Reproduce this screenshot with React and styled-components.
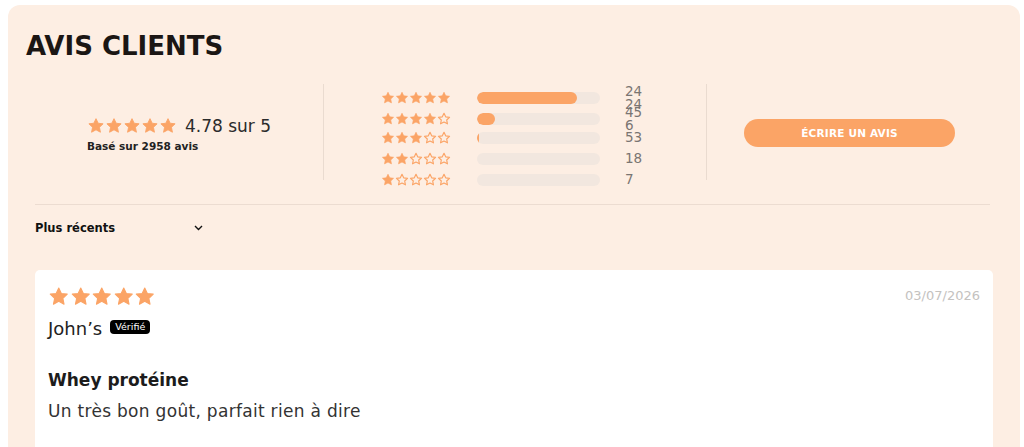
import React from "react";
import styled, { createGlobalStyle } from "styled-components";

const FONT = `"DejaVu Sans", "Open Sans", sans-serif`;
const ORANGE = "#fba466";

const Global = createGlobalStyle`
  html, body { margin: 0; padding: 0; background: #ffffff; }
  body { font-family: ${FONT}; color: #1a1a1a; }
  * { box-sizing: border-box; }
`;

const Page = styled.div`
  padding: 5px 4px 0 8px;
`;

const Panel = styled.section`
  background: #fdeee3;
  border-radius: 12px;
  padding: 26px 27px 30px 18px;
`;

const Title = styled.h2`
  margin: 0;
  font-family: ${FONT};
  font-weight: 700;
  font-size: 26px;
  line-height: 30px;
  color: #1b1614;
`;

const Body = styled.div`
  padding-left: 9px;
`;

const Summary = styled.div`
  display: grid;
  grid-template-columns: 288px 383px 1fr;
  grid-template-rows: 96px;
  height: 96px;
  margin-top: 23px;
`;

const Column = styled.div`
  display: flex;
  align-items: ${(p) => (p.$top ? "flex-start" : "center")};
  justify-content: center;
  border-left: ${(p) => (p.$divider ? "1px solid #eadbd0" : "none")};
  padding-top: ${(p) => (p.$top ? "1px" : "0")};
  overflow: visible;
`;

const Average = styled.div`
  display: flex;
  flex-direction: column;
  gap: 4px;
  margin-top: 3px;
`;

const AverageLine = styled.div`
  display: flex;
  align-items: center;
  gap: 8px;
`;

const AverageValue = styled.span`
  font-size: 17px;
  color: #2b2b2b;
`;

const Based = styled.span`
  font-size: 10.5px;
  font-weight: 700;
  color: #222;
`;

const Stars = styled.span`
  display: inline-flex;
  gap: ${(p) => p.$gap}px;
  line-height: 0;
`;

const Histogram = styled.div`
  display: flex;
  flex-direction: column;
  margin-left: -8px;
`;

const HistRow = styled.div`
  display: grid;
  grid-template-columns: 96px 123px 41px;
  align-items: center;
  height: 21px;
`;

const Track = styled.div`
  height: 12px;
  border-radius: 6px;
  background: #f2e7df;
  overflow: hidden;
`;

const Fill = styled.div`
  height: 100%;
  background: ${ORANGE};
  border-radius: 6px;
`;

const Count = styled.div`
  padding-left: 25px;
  font-size: 13.5px;
  line-height: 12.5px;
  color: #7a7572;
  white-space: pre-line;
`;

const WriteButton = styled.button`
  width: 211px;
  height: 28px;
  margin-left: -1px;
  margin-top: 1px;
  border: none;
  border-radius: 14px;
  background: ${ORANGE};
  color: #ffffff;
  font-family: ${FONT};
  font-weight: 700;
  font-size: 10.5px;
  letter-spacing: 0.2px;
  cursor: pointer;
`;

const Divider = styled.hr`
  margin: 24px 3px 0 0;
  border: none;
  border-top: 1px solid #ecdcd1;
`;

const Sort = styled.div`
  display: flex;
  align-items: center;
  width: 168px;
  justify-content: space-between;
  margin-top: 15px;
  height: 16px;
  font-size: 11.5px;
  font-weight: 700;
  color: #111;
`;

const ReviewCard = styled.article`
  margin-top: 34px;
  background: #ffffff;
  border-radius: 5px;
  padding: 16px 13px 60px 13px;
`;

const ReviewHead = styled.div`
  display: flex;
  justify-content: space-between;
  align-items: center;
`;

const DateText = styled.span`
  font-size: 13px;
  color: #c4c2c0;
  margin-top: -2px;
`;

const Author = styled.div`
  display: flex;
  align-items: center;
  gap: 8px;
  margin-top: 10px;
  font-size: 18px;
  color: #222;
`;

const Badge = styled.span`
  background: #000;
  color: #fff;
  font-size: 9.5px;
  line-height: 14px;
  padding: 0 5px;
  border-radius: 4px;
  margin-top: -3px;
`;

const ReviewTitle = styled.h3`
  margin: 31px 0 0;
  font-size: 17px;
  font-weight: 700;
  color: #1c1c1c;
`;

const ReviewText = styled.p`
  margin: 11px 0 0;
  font-size: 17px;
  letter-spacing: 0.3px;
  color: #333;
`;

const STAR_PATH =
  "M12 2.2l2.9 6.1 6.6.8-4.9 4.6 1.3 6.6L12 17.1l-5.9 3.2 1.3-6.6-4.9-4.6 6.6-.8z";

function Star({ size, filled }) {
  return (
    <svg width={size} height={size} viewBox="0 0 24 24">
      <path
        d={STAR_PATH}
        fill={filled ? ORANGE : "none"}
        stroke={ORANGE}
        strokeWidth={filled ? 1.2 : 2}
        strokeLinejoin="round"
      />
    </svg>
  );
}

function StarRow({ count, size, gap }) {
  return (
    <Stars $gap={gap}>
      {[0, 1, 2, 3, 4].map((i) => (
        <Star key={i} size={size} filled={i < count} />
      ))}
    </Stars>
  );
}

const histogram = [
  { stars: 5, pct: 81, count: "24\n24" },
  { stars: 4, pct: 15, count: "45\n6" },
  { stars: 3, pct: 1.5, count: "53" },
  { stars: 2, pct: 0, count: "18" },
  { stars: 1, pct: 0, count: "7" },
];

function Chevron() {
  return (
    <svg width="9" height="6" viewBox="0 0 9 6">
      <path d="M1 1l3.5 3.5L8 1" fill="none" stroke="#111" strokeWidth="1.4" />
    </svg>
  );
}

export default function App() {
  return (
    <>
      <Global />
      <Page>
        <Panel>
          <Title>AVIS CLIENTS</Title>
          <Body>
            <Summary>
              <Column>
                <Average>
                  <AverageLine>
                    <StarRow count={5} size={18} gap={-1} />
                    <AverageValue>4.78 sur 5</AverageValue>
                  </AverageLine>
                  <Based>Basé sur 2958 avis</Based>
                </Average>
              </Column>
              <Column $divider $top>
                <Histogram>
                  {histogram.map((row) => (
                    <HistRow key={row.stars}>
                      <StarRow count={row.stars} size={14} gap={-0.5} />
                      <Track>
                        <Fill style={{ width: `${row.pct}%` }} />
                      </Track>
                      <Count>{row.count}</Count>
                    </HistRow>
                  ))}
                </Histogram>
              </Column>
              <Column $divider>
                <WriteButton>ÉCRIRE UN AVIS</WriteButton>
              </Column>
            </Summary>
            <Divider />
            <Sort>
              <span>Plus récents</span>
              <Chevron />
            </Sort>
            <ReviewCard>
              <ReviewHead>
                <StarRow count={5} size={21.5} gap={-0.5} />
                <DateText>03/07/2026</DateText>
              </ReviewHead>
              <Author>
                John’s <Badge>Vérifié</Badge>
              </Author>
              <ReviewTitle>Whey protéine</ReviewTitle>
              <ReviewText>Un très bon goût, parfait rien à dire</ReviewText>
            </ReviewCard>
          </Body>
        </Panel>
      </Page>
    </>
  );
}
